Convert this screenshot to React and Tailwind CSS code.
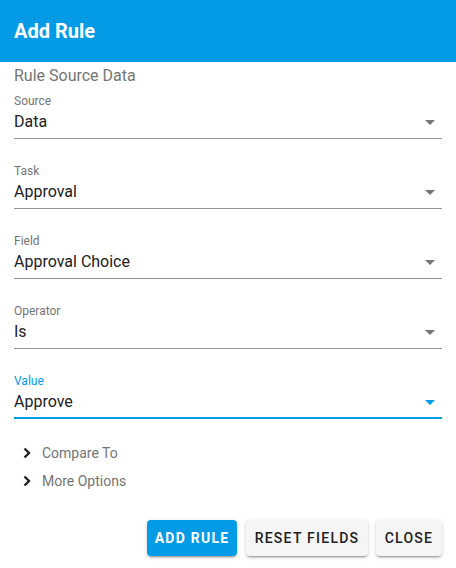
import React from "react";

function Arrow({ blue }) {
  return (
    <svg width="10" height="5" viewBox="0 0 10 5" className="shrink-0">
      <path d="M0 0 L10 0 L5 5 Z" fill={blue ? "#039be5" : "#757575"} />
    </svg>
  );
}

function Field({ label, value, focused }) {
  return (
    <div className="flex flex-col">
      <div className={`text-[12px] leading-[16px] pt-px ${focused ? "text-[#039be5]" : "text-[#757575]"}`}>{label}</div>
      <div
        className={`flex items-start justify-between pt-[1px] ${focused ? "h-[30px] border-b-2 border-[#039be5]" : "h-[30px] border-b border-[#949494]"}`}
      >
        <span className="text-[16px] leading-[24px] text-[#212121]">{value}</span>
        <div className="mt-[10px] mr-[7px]">
          <Arrow blue={focused} />
        </div>
      </div>
    </div>
  );
}

function Chevron() {
  return (
    <svg width="10" height="12" viewBox="0 0 10 12" className="shrink-0">
      <path d="M2.5 1.5 L7 6 L2.5 10.5" fill="none" stroke="#212121" strokeWidth="2.4" />
    </svg>
  );
}

const shadow =
  "shadow-[0_3px_1px_-2px_rgba(0,0,0,0.2),0_2px_2px_0_rgba(0,0,0,0.14),0_1px_5px_0_rgba(0,0,0,0.12)]";

export default function App() {
  return (
    <div className="w-[456px] h-[568px] bg-white" style={{ fontFamily: "Roboto, 'Liberation Sans', sans-serif" }}>
      <div className="h-[62px] bg-[#039be5] flex items-center px-[14px]">
        <h1 className="text-white text-[20px] font-bold">Add Rule</h1>
      </div>
      <div className="px-[14px]">
        <div className="text-[16px] leading-[24px] text-[#757575] mt-[2px]">Rule Source Data</div>
        <div className="flex flex-col gap-[23px] mt-[4px]">
          <Field label="Source" value="Data" />
          <Field label="Task" value="Approval" />
          <Field label="Field" value="Approval Choice" />
          <Field label="Operator" value="Is" />
          <Field label="Value" value="Approve" focused />
        </div>
        <div className="mt-[24px] flex flex-col gap-[8px] pl-[8px]">
          <div className="flex items-center gap-[10px] h-[20px]">
            <Chevron />
            <span className="text-[14px] text-[#757575]">Compare To</span>
          </div>
          <div className="flex items-center gap-[10px] h-[20px]">
            <Chevron />
            <span className="text-[14px] text-[#757575]">More Options</span>
          </div>
        </div>
        <div className="flex justify-end gap-[8px] mt-[29px]">
          <button className={`h-[36px] w-[90px] mr-px rounded-[4px] bg-[#039be5] text-white text-[14px] font-bold tracking-[1.25px] ${shadow}`}>
            ADD RULE
          </button>
          <button className={`h-[36px] w-[122px] rounded-[4px] bg-[#f5f5f5] text-[#212121] text-[14px] font-medium tracking-[1.25px] ${shadow}`}>
            RESET FIELDS
          </button>
          <button className={`h-[36px] w-[66px] rounded-[4px] bg-[#f5f5f5] text-[#212121] text-[14px] font-medium tracking-[1.25px] ${shadow}`}>
            CLOSE
          </button>
        </div>
      </div>
    </div>
  );
}
